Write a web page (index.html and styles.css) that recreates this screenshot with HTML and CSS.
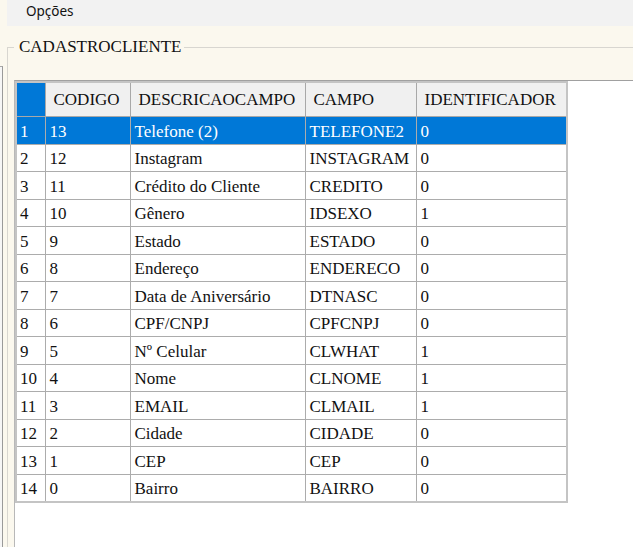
FILE: index.html
```html
<!DOCTYPE html>
<html lang="pt">
<head>
<meta charset="utf-8">
<title>Cadastro Cliente</title>
<link rel="stylesheet" href="styles.css">
</head>
<body>
<div class="menubar"><span class="menu-item">Opções</span></div>
<div class="main">
  <div class="side-strip"></div>
  <fieldset class="group">
    <legend class="group-title">CADASTROCLIENTE</legend>
    <div class="grid">
      <table class="table">
        <colgroup>
          <col class="c-rh"><col class="c-cod"><col class="c-desc"><col class="c-campo"><col class="c-id">
        </colgroup>
        <thead>
          <tr>
            <th class="corner"></th>
            <th>CODIGO</th>
            <th>DESCRICAOCAMPO</th>
            <th>CAMPO</th>
            <th>IDENTIFICADOR</th>
          </tr>
        </thead>
        <tbody>
          <tr class="selected"><td class="rh">1</td><td>13</td><td>Telefone (2)</td><td>TELEFONE2</td><td>0</td></tr>
          <tr><td class="rh">2</td><td>12</td><td>Instagram</td><td>INSTAGRAM</td><td>0</td></tr>
          <tr><td class="rh">3</td><td>11</td><td>Crédito do Cliente</td><td>CREDITO</td><td>0</td></tr>
          <tr><td class="rh">4</td><td>10</td><td>Gênero</td><td>IDSEXO</td><td>1</td></tr>
          <tr><td class="rh">5</td><td>9</td><td>Estado</td><td>ESTADO</td><td>0</td></tr>
          <tr><td class="rh">6</td><td>8</td><td>Endereço</td><td>ENDERECO</td><td>0</td></tr>
          <tr><td class="rh">7</td><td>7</td><td>Data de Aniversário</td><td>DTNASC</td><td>0</td></tr>
          <tr><td class="rh">8</td><td>6</td><td>CPF/CNPJ</td><td>CPFCNPJ</td><td>0</td></tr>
          <tr><td class="rh">9</td><td>5</td><td>Nº Celular</td><td>CLWHAT</td><td>1</td></tr>
          <tr><td class="rh">10</td><td>4</td><td>Nome</td><td>CLNOME</td><td>1</td></tr>
          <tr><td class="rh">11</td><td>3</td><td>EMAIL</td><td>CLMAIL</td><td>1</td></tr>
          <tr><td class="rh">12</td><td>2</td><td>Cidade</td><td>CIDADE</td><td>0</td></tr>
          <tr><td class="rh">13</td><td>1</td><td>CEP</td><td>CEP</td><td>0</td></tr>
          <tr><td class="rh">14</td><td>0</td><td>Bairro</td><td>BAIRRO</td><td>0</td></tr>
        </tbody>
      </table>
    </div>
  </fieldset>
</div>
</body>
</html>
```

FILE: styles.css
```css
html, body {
  margin: 0;
  padding: 0;
  height: 547px;
  overflow: hidden;
}

body {
  background: #fbf8ee;
  font-family: "Liberation Serif", "Times New Roman", serif;
  font-size: 17px;
  color: #111;
}

.menubar {
  height: 26px;
  background: #f2f2f2;
  display: flex;
  align-items: center;
  box-sizing: border-box;
  margin-left: 7px;
  padding-left: 19px;
}

.menu-item {
  font-family: "Noto Sans", "Open Sans", sans-serif;
  font-size: 13.5px;
  color: #111;
  line-height: 1;
  margin-top: -3px;
}

.main {
  display: flex;
  height: 521px;
}

.side-strip {
  width: 2px;
  margin-top: 40px;
  background: #f6f6f6;
  border-top: 1px solid #a8a8a8;
  border-right: 1px solid #9a9a9a;
}

.group {
  flex: 1;
  margin: 11px -30px 0 4px;
  padding: 23px 0 0 6px;
  border: 1px solid #d8d6d0;
  border-right: none;
  border-bottom: none;
  min-width: 0;
}

.group-title {
  padding: 0 3px 0 5px;
  line-height: 20px;
  font-size: 17px;
  color: #111;
}

.grid {
  background: #ffffff;
  border-top: 1px solid #a0a0a0;
  border-left: 1px solid #b8b8b8;
  height: 480px;
}

.table {
  border-collapse: collapse;
  table-layout: fixed;
  width: 551px;
  border: 2px solid #c4c4c4;
}

.c-rh { width: 29px; }
.c-cod { width: 85px; }
.c-desc { width: 175px; }
.c-campo { width: 111px; }
.c-id { width: 151px; }

.table th {
  height: 33px;
  background: #f0f0f0;
  font-weight: normal;
  text-align: left;
  padding: 0 0 0 8px;
  border: 1px solid #a8a8a8;
  white-space: nowrap;
  overflow: hidden;
  vertical-align: middle;
}

.table th.corner {
  background: #0078d7;
}

.table td {
  height: 23.5px;
  padding: 3px 0 0 4px;
  border: 1px solid #acacac;
  white-space: nowrap;
  overflow: hidden;
  vertical-align: middle;
  line-height: 20px;
}

.table td.rh {
  padding-left: 3px;
}

.table tr.selected td {
  background: #0078d7;
  color: #ffffff;
}
```
